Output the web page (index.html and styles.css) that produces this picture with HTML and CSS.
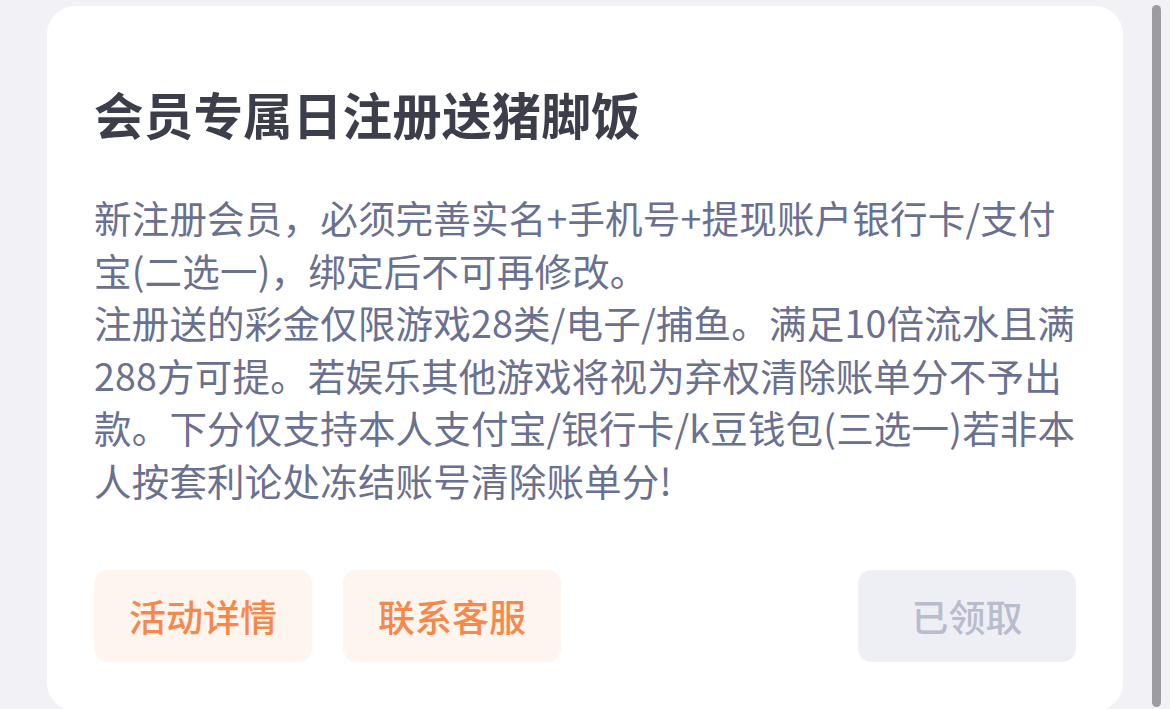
FILE: index.html
```html
<!DOCTYPE html>
<html lang="zh-CN">
<head>
<meta charset="utf-8">
<title>会员专属日注册送猪脚饭</title>
<link rel="stylesheet" href="styles.css">
</head>
<body>
<div class="page">
  <section class="card">
    <h1 class="title">会员专属日注册送猪脚饭</h1>
    <p class="desc">新注册会员，必须完善实名+手机号+提现账户银行卡/支付<br>宝(二选一)，绑定后不可再修改。<br>注册送的彩金仅限游戏28类/电子/捕鱼。满足10倍流水且满<br>288方可提。若娱乐其他游戏将视为弃权清除账单分不予出<br>款。下分仅支持本人支付宝/银行卡/k豆钱包(三选一)若非本<br>人按套利论处冻结账号清除账单分!</p>
    <div class="actions">
      <button class="btn btn-orange">活动详情</button>
      <button class="btn btn-orange">联系客服</button>
      <button class="btn btn-done">已领取</button>
    </div>
  </section>
</div>
<div class="scrollbar"></div>
</body>
</html>
```
FILE: styles.css
```css
html, body {
  margin: 0;
  padding: 0;
  overflow: hidden;
  background: #f1f1f6;
  font-family: "PingFang SC", "Noto Sans CJK SC", "Noto Sans", sans-serif;
}

.page {
  padding: 6px 47px 0;
}

.card {
  background: #ffffff;
  border-radius: 28px;
  padding: 78px 47px 49px 47px;
  box-sizing: border-box;
}

.title {
  margin: 0 0 47px;
  font-size: 49.5px;
  line-height: 60px;
  font-weight: 600;
  color: #3c3f4b;
  letter-spacing: 0.2px;
}

.desc {
  margin: 0;
  font-size: 37.5px;
  line-height: 52.5px;
  color: #6a7090;
  white-space: nowrap;
  letter-spacing: 0.2px;
}

.actions {
  display: flex;
  gap: 31px;
  margin-top: 64px;
}

.btn {
  width: 218px;
  height: 92px;
  border: none;
  border-radius: 14px;
  font-family: inherit;
  font-size: 37px;
  font-weight: 500;
  padding: 0;
}

.btn-orange {
  background: #fff5ef;
  color: #f5884a;
}

.btn-done {
  margin-left: auto;
  background: #eeeff4;
  color: #b8bccd;
}

.scrollbar {
  position: fixed;
  left: 1152px;
  top: 5px;
  width: 9px;
  height: 702px;
  border-radius: 5px;
  background: #9d9da1;
}
```
